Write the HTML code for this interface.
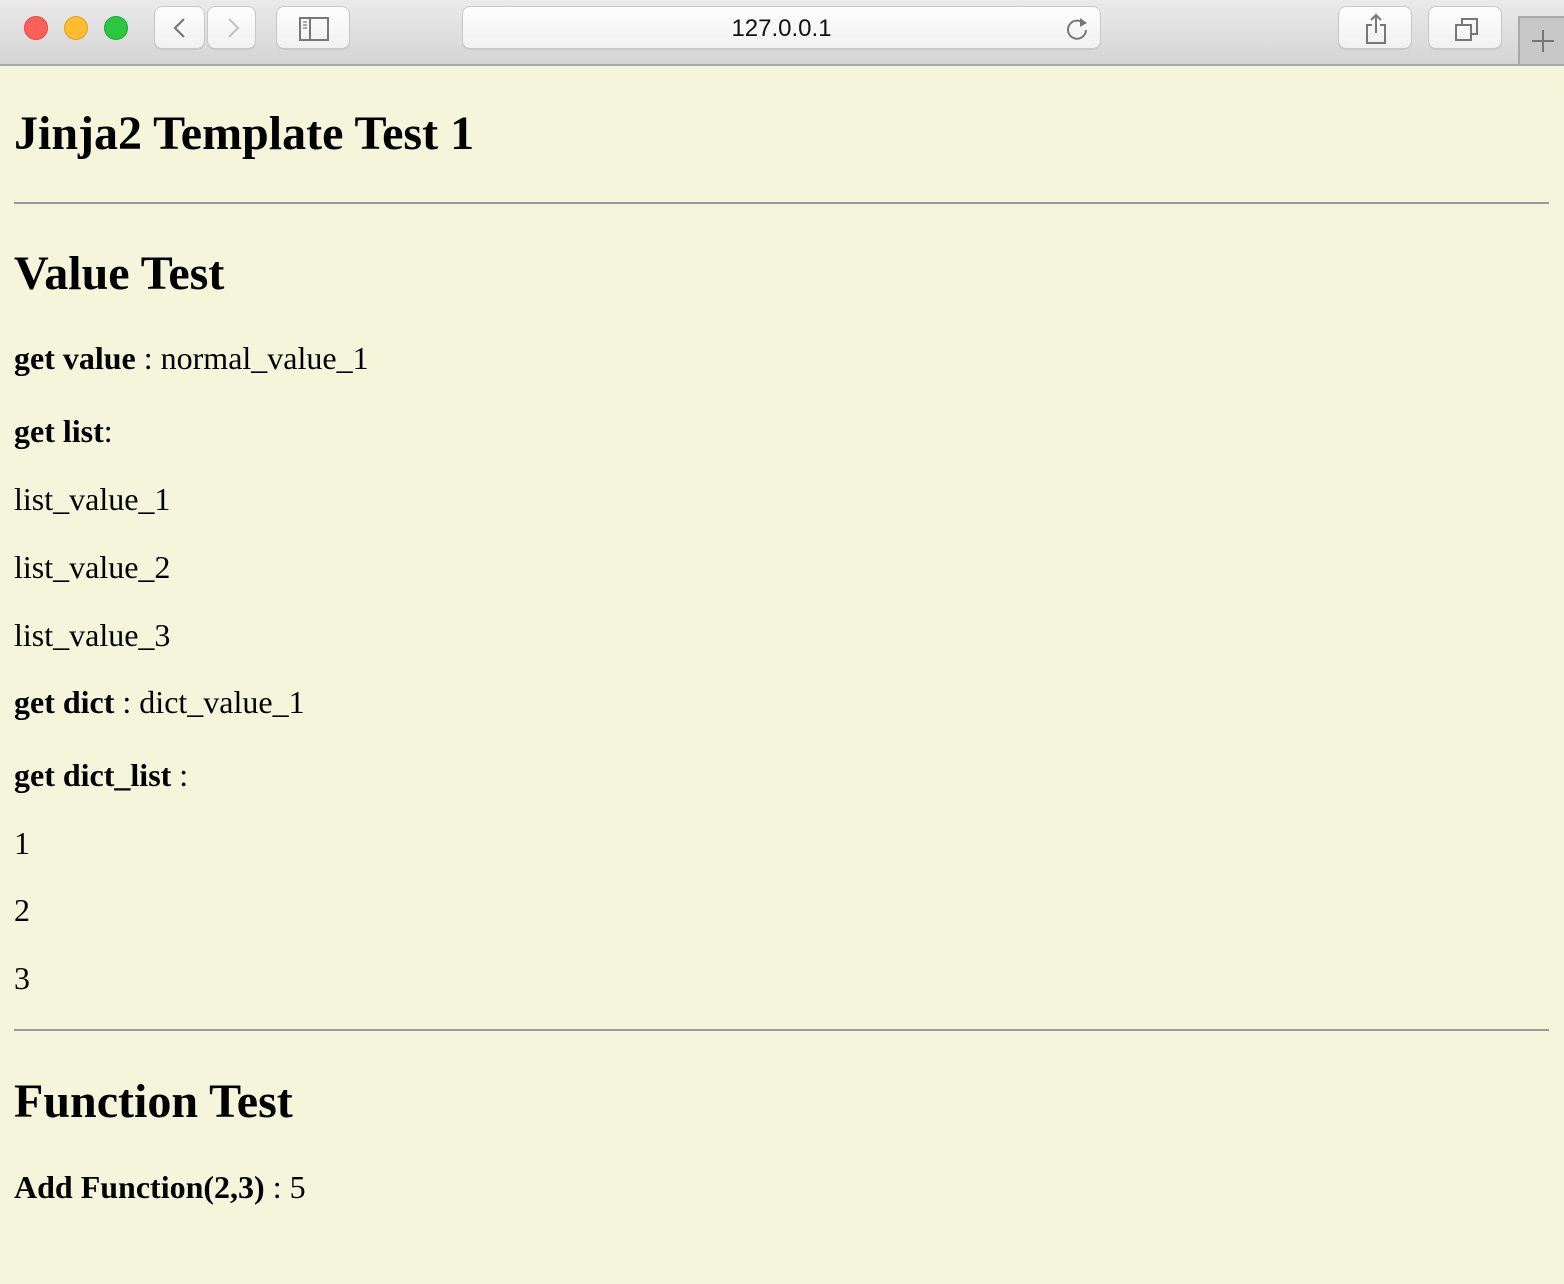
<!DOCTYPE html>
<html><head><meta charset="utf-8"><style>
html,body{margin:0;padding:0;width:1564px;height:1284px;overflow:hidden;background:#f5f5dc;}
body{position:relative;font-family:"Liberation Serif",serif;color:#000;}
.bar{position:absolute;left:0;top:0;width:1564px;height:64px;background:linear-gradient(#ebeaeb,#d6d5d6);border-bottom:2px solid #a9a9a9;}
.btn{position:absolute;top:6px;height:43px;background:linear-gradient(#fdfdfd,#f1f1f1);border:1px solid #c8c8c8;border-radius:8px;box-sizing:border-box;box-shadow:0 1px 0 rgba(0,0,0,0.08);}
.dot{position:absolute;top:16px;width:24px;height:24px;border-radius:50%;box-sizing:border-box;}
.t{position:absolute;left:14px;line-height:1;white-space:nowrap;font-size:32px;}
.h1{font-size:48px;font-weight:bold;}
.h2{font-size:48px;font-weight:bold;}
hr{position:absolute;left:14px;width:1535px;margin:0;border:0;border-top:2px solid #9a9a9a;height:0;}
svg{position:absolute;}
</style></head><body>
<div class="bar">
<div class="dot" style="left:24px;background:#fe5f57;border:1px solid #e2463f"></div>
<div class="dot" style="left:64px;background:#febc2e;border:1px solid #e0a025"></div>
<div class="dot" style="left:104px;background:#2ac840;border:1px solid #1aab2c"></div>
<div class="btn" style="left:154px;width:51px"><svg style="left:14px;top:10px" width="22" height="22" viewBox="0 0 22 22"><path d="M15 2 L6 11 L15 20" fill="none" stroke="#777" stroke-width="2.2"/></svg></div>
<div class="btn" style="left:207px;width:49px"><svg style="left:14px;top:10px" width="22" height="22" viewBox="0 0 22 22"><path d="M7 2 L16 11 L7 20" fill="none" stroke="#c4c4c4" stroke-width="2.2"/></svg></div>
<div class="btn" style="left:276px;width:74px"><svg style="left:21px;top:9px" width="32" height="26" viewBox="0 0 32 26"><rect x="2" y="2" width="28" height="22" fill="none" stroke="#777" stroke-width="2"/><line x1="12" y1="2" x2="12" y2="24" stroke="#777" stroke-width="2"/><path d="M5 6h4M5 9h4M5 12h4" stroke="#777" stroke-width="1.3"/></svg></div>
<div class="btn" style="left:462px;width:639px;font-family:'Liberation Sans',sans-serif;font-size:24px;text-align:center;line-height:43px;color:#111">127.0.0.1<svg style="left:602px;top:8px" width="26" height="28" viewBox="0 0 26 28"><path d="M19 9 A9 9 0 1 0 21 15" fill="none" stroke="#777" stroke-width="2"/><path d="M15 3 L22 8 L15 12 Z" fill="#777"/></svg></div>
<div class="btn" style="left:1338px;width:74px"><svg style="left:24px;top:6px" width="26" height="32" viewBox="0 0 26 32"><path d="M9 12 H4 V30 H22 V12 H17" fill="none" stroke="#777" stroke-width="2"/><path d="M13 2 V20 M8 7 L13 2 L18 7" fill="none" stroke="#777" stroke-width="2"/></svg></div>
<div class="btn" style="left:1428px;width:74px"><svg style="left:24px;top:9px" width="28" height="28" viewBox="0 0 28 28"><rect x="3" y="9" width="15" height="15" fill="none" stroke="#777" stroke-width="2"/><path d="M9 9 V3 H24 V18 H18" fill="none" stroke="#777" stroke-width="2"/></svg></div>
<div style="position:absolute;left:1518px;top:16px;width:46px;height:48px;background:#c9c8c9;border-left:2px solid #a9a9a9;border-top:2px solid #a9a9a9;box-sizing:border-box"><svg style="left:10px;top:10px" width="26" height="26" viewBox="0 0 26 26"><path d="M13 2 V24 M2 13 H24" stroke="#777" stroke-width="2"/></svg></div>
</div>

<div class="t h1" style="top:110px">Jinja2 Template Test 1</div>
<hr style="top:202px">
<div class="t h2" style="top:250px">Value Test</div>
<div class="t" style="top:342px"><b>get value</b> : normal_value_1</div>
<div class="t" style="top:415px"><b>get list</b>:</div>
<div class="t" style="top:483px">list_value_1</div>
<div class="t" style="top:551px">list_value_2</div>
<div class="t" style="top:619px">list_value_3</div>
<div class="t" style="top:686px"><b>get dict</b> : dict_value_1</div>
<div class="t" style="top:759px"><b>get dict_list</b> :</div>
<div class="t" style="top:827px">1</div>
<div class="t" style="top:894px">2</div>
<div class="t" style="top:962px">3</div>
<hr style="top:1029px">
<div class="t h2" style="top:1078px">Function Test</div>
<div class="t" style="top:1171px"><b>Add Function(2,3)</b> : 5</div>
</body></html>
